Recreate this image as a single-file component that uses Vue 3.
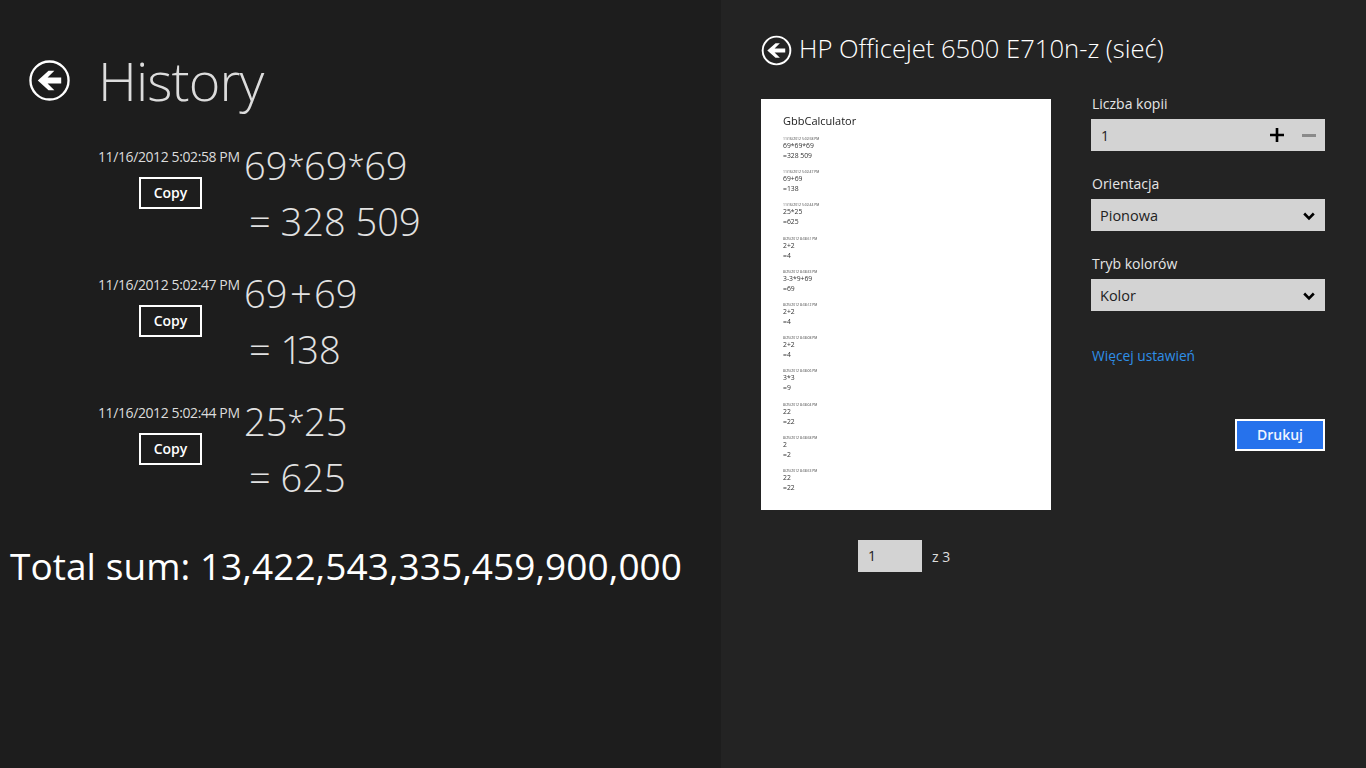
<script setup>
const history = [
  { date: '11/16/2012 5:02:58 PM', expr: ['69', '*', '69', '*', '69'], result: ['= 328 509'] },
  { date: '11/16/2012 5:02:47 PM', expr: ['69', '+', '69'], result: ['= ', '1', '38'] },
  { date: '11/16/2012 5:02:44 PM', expr: ['25', '*', '25'], result: ['= 625'] },
]
const preview = [
  { date: '11/16/2012 5:02:58 PM', expr: '69*69*69', result: '=328 509' },
  { date: '11/16/2012 5:02:47 PM', expr: '69+69', result: '=138' },
  { date: '11/16/2012 5:02:44 PM', expr: '25*25', result: '=625' },
  { date: '8/25/2012 8:38:51 PM', expr: '2+2', result: '=4' },
  { date: '8/25/2012 8:38:33 PM', expr: '3-3*9+69', result: '=69' },
  { date: '8/25/2012 8:38:12 PM', expr: '2+2', result: '=4' },
  { date: '8/25/2012 8:38:08 PM', expr: '2+2', result: '=4' },
  { date: '8/25/2012 8:38:06 PM', expr: '3*3', result: '=9' },
  { date: '8/25/2012 8:38:04 PM', expr: '22', result: '=22' },
  { date: '8/25/2012 8:38:58 PM', expr: '2', result: '=2' },
  { date: '8/25/2012 8:38:53 PM', expr: '22', result: '=22' },
]
function partClass(p) {
  if (p === '*') return 'star'
  if (p === '+') return 'plus-op'
  if (p === '1') return 'one'
  return ''
}
</script>

<template>
  <div class="screen">
    <main class="app">
      <header class="app-head">
        <svg class="back-big" viewBox="0 0 42 42" aria-hidden="true">
          <circle cx="21" cy="21" r="19.5" fill="none" stroke="#fff" stroke-width="2.4" />
          <path d="M9 21 L20 11 H26 L19 18 H33 V24 H19 L26 31 H20 Z" fill="#fff" />
        </svg>
        <h1 class="app-title">History</h1>
      </header>
      <section class="rows">
        <article v-for="item in history" :key="item.date" class="row">
          <div class="meta">
            <div class="date">{{ item.date }}</div>
            <button class="copy">Copy</button>
          </div>
          <div class="calc">
            <div class="expr"><span v-for="(p, i) in item.expr" :key="i" :class="partClass(p)">{{ p }}</span></div>
            <div class="result"><span v-for="(p, i) in item.result" :key="i" :class="partClass(p)">{{ p }}</span></div>
          </div>
        </article>
      </section>
      <div class="total">Total sum: 13,422,543,335,459,900,000</div>
    </main>

    <aside class="print">
      <header class="print-head">
        <svg class="back-small" viewBox="0 0 32 32" aria-hidden="true">
          <circle cx="16" cy="16" r="14.3" fill="none" stroke="#fff" stroke-width="2" />
          <path d="M6.5 16 L15 8.5 H19.5 L14 14 H25 V18 H14 L19.5 23.5 H15 Z" fill="#fff" />
        </svg>
        <h2 class="print-title">HP Officejet 6500 E710n-z (sieć)</h2>
      </header>
      <div class="print-body">
        <div class="preview-col">
          <div class="sheet">
            <div class="sheet-title">GbbCalculator</div>
            <div v-for="(p, i) in preview" :key="i" class="p-item">
              <div class="p-date">{{ p.date }}</div>
              <div class="p-line">{{ p.expr }}</div>
              <div class="p-line">{{ p.result }}</div>
            </div>
          </div>
          <div class="pager">
            <div class="pager-input">1</div>
            <span class="pager-of">z 3</span>
          </div>
        </div>
        <div class="settings">
          <label class="label">Liczba kopii</label>
          <div class="field copies">
            <span class="copies-value">1</span>
            <svg class="plus" viewBox="0 0 16 16" aria-hidden="true"><path d="M6.5 0h3v6.5H16v3H9.5V16h-3V9.5H0v-3h6.5z" fill="#000" /></svg>
            <span class="minus"></span>
          </div>
          <label class="label">Orientacja</label>
          <div class="field select">
            <span>Pionowa</span>
            <svg class="chev" viewBox="0 0 12 9" aria-hidden="true"><path d="M1.2 1.5 6 6.3 10.8 1.5" fill="none" stroke="#000" stroke-width="2.6" /></svg>
          </div>
          <label class="label">Tryb kolorów</label>
          <div class="field select">
            <span>Kolor</span>
            <svg class="chev" viewBox="0 0 12 9" aria-hidden="true"><path d="M1.2 1.5 6 6.3 10.8 1.5" fill="none" stroke="#000" stroke-width="2.6" /></svg>
          </div>
          <a class="more">Więcej ustawień</a>
          <button class="printbtn">Drukuj</button>
        </div>
      </div>
    </aside>
  </div>
</template>

<style>
html, body { margin: 0; background: #1d1d1d; }
</style>

<style scoped>
.screen {
  width: 1366px;
  height: 768px;
  display: flex;
  overflow: hidden;
  font-family: "Open Sans", "Noto Sans", sans-serif;
  color: #fff;
}
.app {
  width: 721px;
  background: #1d1d1d;
  flex: none;
  box-sizing: border-box;
}
.app-head {
  display: flex;
  align-items: flex-start;
  padding: 60px 0 0 29px;
  height: 90px;
  box-sizing: border-box;
}
.back-big { width: 41px; height: 41px; flex: none; }
.app-title {
  margin: -12px 0 0 28px;
  font-size: 54px;
  font-weight: 300;
  line-height: 64px;
  color: #dcdcdc;
  letter-spacing: -0.9px;
}
.rows { padding: 44px 0 0 98px; }
.row { display: flex; height: 128px; }
.meta { width: 146px; flex: none; }
.date {
  font-size: 14px;
  line-height: 18px;
  margin-top: 14px;
  color: #dcdcdc;
  white-space: nowrap;
  letter-spacing: -0.4px;
}
.copy {
  display: block;
  width: 63px;
  height: 32px;
  margin: 11px 0 0 41px;
  padding: 0 0 2px;
  background: transparent;
  border: 2px solid #fff;
  color: #fff;
  font: 600 14px "Open Sans", sans-serif;
}
.expr, .result {
  font-size: 38px;
  font-weight: 300;
  color: #e2e2e2;
  white-space: nowrap;
}
.expr { line-height: 62px; }
.result { line-height: 58px; margin-top: -4px; padding-left: 5px; }
.star { font-size: 31px; line-height: 0; vertical-align: 3px; letter-spacing: -0.4px; }
.plus-op { margin: 0 2.5px; }
.one { letter-spacing: -5px; }
.total {
  margin: 23px 0 0 10px;
  font-size: 37px;
  line-height: 50px;
  white-space: nowrap;
  color: #fff;
  letter-spacing: 0.06px;
}
.print {
  flex: 1;
  background: #232323;
  padding: 35px 41px 0 40px;
  box-sizing: border-box;
}
.print-head { display: flex; align-items: center; height: 30px; }
.back-small { width: 31px; height: 31px; flex: none; }
.print-title {
  margin: -3px 0 0 7px;
  font-size: 25.6px;
  font-weight: 300;
  line-height: 30px;
  color: #fff;
  white-space: nowrap;
}
.print-body { display: flex; margin-top: 34px; }
.preview-col { width: 330px; flex: none; }
.sheet {
  width: 290px;
  height: 411px;
  background: #fff;
  box-sizing: border-box;
  padding: 14px 22px 0;
  color: #333;
}
.sheet-title { font-size: 11px; line-height: 15px; margin-bottom: 8px; color: #222; filter: blur(0.2px); }
.p-item { height: 33.2px; filter: blur(0.25px); }
.p-date { font-size: 3.4px; line-height: 5px; color: #444; white-space: nowrap; }
.p-line { font-size: 6.8px; line-height: 10px; color: #333; white-space: nowrap; }
.pager {
  display: flex;
  align-items: center;
  margin: 30px 0 0 97px;
}
.pager-input {
  width: 64px;
  height: 32px;
  background: #d3d3d3;
  color: #222;
  font-size: 14px;
  line-height: 32px;
  padding-left: 10px;
  box-sizing: border-box;
}
.pager-of { margin-left: 10px; font-size: 14px; color: #ddd; }
.settings { width: 234px; flex: none; display: flex; flex-direction: column; }
.label {
  font-size: 14px;
  line-height: 20px;
  height: 20px;
  color: #e6e6e6;
  margin-bottom: 5px;
  padding-left: 1px;
}
.label:first-child { margin-top: -5px; }
.field {
  height: 32px;
  background: #d3d3d3;
  color: #222;
  font-size: 15px;
  display: flex;
  align-items: center;
  margin-bottom: 23px;
  flex: none;
}
.copies { padding: 0 9px 0 10px; }
.copies-value { flex: 1; font-size: 14px; }
.plus { width: 14px; height: 14px; margin-right: 18px; }
.minus { width: 14px; height: 3px; background: #8a8a8a; }
.select { justify-content: space-between; padding: 0 10px 0 9px; font-size: 14.5px; }
.chev { width: 12px; height: 9px; margin-top: 3px; }
.more {
  font-size: 13.75px;
  line-height: 20px;
  margin-top: 12px;
  padding-left: 1px;
  color: #2f8fe8;
}
.printbtn {
  width: 90px;
  height: 32px;
  margin: 53px 0 0 auto;
  padding: 0 0 1px;
  background: #2672ec;
  border: 2px solid #fff;
  color: #f0f4ff;
  font: 600 14px "Open Sans", sans-serif;
}
</style>
